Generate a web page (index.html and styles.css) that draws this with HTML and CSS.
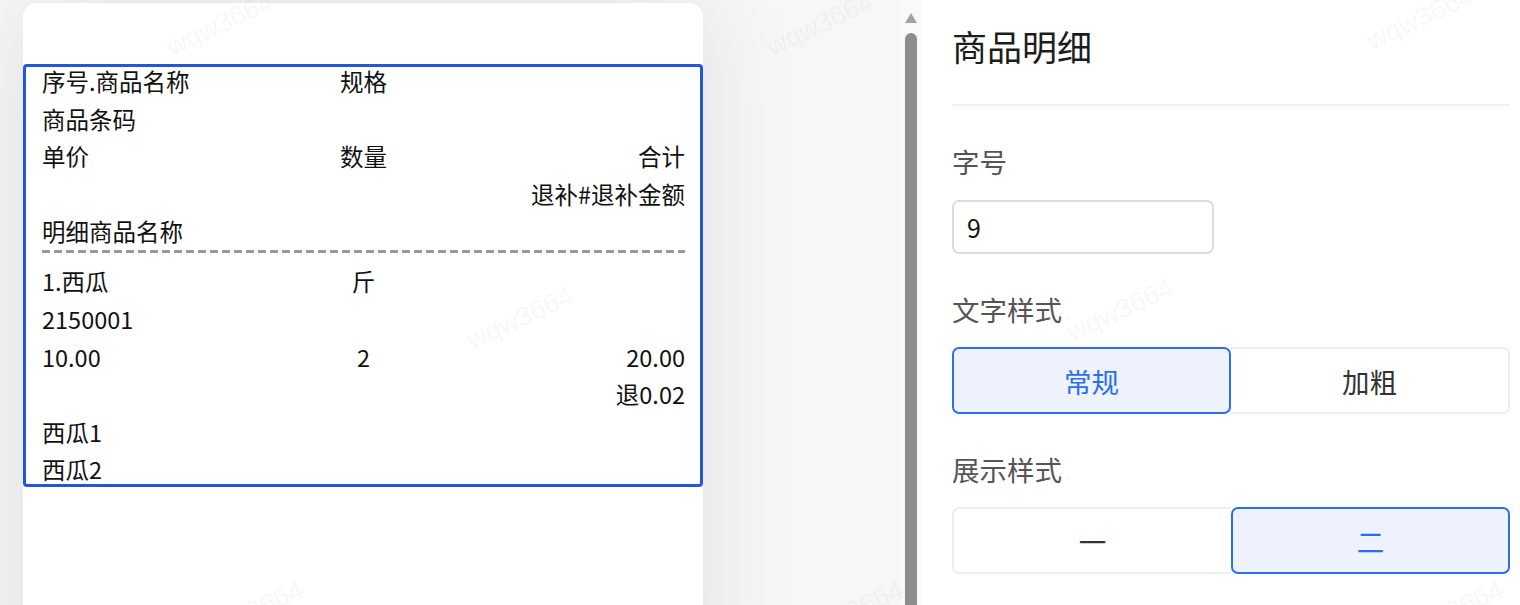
FILE: index.html
```html
<!DOCTYPE html>
<html lang="zh-CN">
<head>
<meta charset="utf-8">
<title>商品明细</title>
<link rel="stylesheet" href="styles.css">
</head>
<body>
<div class="app">
  <section class="preview">
    <div class="card">
      <div class="block">
        <div class="group">
          <div class="row"><span>序号.商品名称</span><span class="c2">规格</span><span class="c3"></span></div>
          <div class="row"><span>商品条码</span></div>
          <div class="row"><span>单价</span><span class="c2">数量</span><span class="c3">合计</span></div>
          <div class="row"><span class="c3 only">退补#退补金额</span></div>
          <div class="row"><span>明细商品名称</span></div>
        </div>
        <div class="dash"></div>
        <div class="group">
          <div class="row"><span>1.西瓜</span><span class="c2">斤</span><span class="c3"></span></div>
          <div class="row"><span>2150001</span></div>
          <div class="row"><span>10.00</span><span class="c2">2</span><span class="c3">20.00</span></div>
          <div class="row"><span class="c3 only">退0.02</span></div>
          <div class="row"><span>西瓜1</span></div>
          <div class="row"><span>西瓜2</span></div>
        </div>
      </div>
    </div>
  </section>
  <div class="scrollbar">
    <div class="arrow"></div>
    <div class="thumb"></div>
  </div>
  <aside class="panel">
    <h2 class="title">商品明细</h2>
    <div class="divider"></div>
    <div class="fields">
      <div class="field">
        <div class="label">字号</div>
        <div class="input">9</div>
      </div>
      <div class="field">
        <div class="label">文字样式</div>
        <div class="seg">
          <div class="opt active">常规</div>
          <div class="opt right">加粗</div>
        </div>
      </div>
      <div class="field">
        <div class="label">展示样式</div>
        <div class="seg">
          <div class="opt left">一</div>
          <div class="opt active">二</div>
        </div>
      </div>
    </div>
  </aside>
</div>
<div class="watermarks">
  <span class="wm wm1">wqw3664</span>
  <span class="wm wm2">wqw3664</span>
  <span class="wm wm3">wqw3664</span>
  <span class="wm wm4">wqw3664</span>
  <span class="wm wm5">wqw3664</span>
  <span class="wm wm6">wqw3664</span>
  <span class="wm wm7">wqw3664</span>
  <span class="wm wm8">wqw3664</span>
</div>
</body>
</html>
```

FILE: styles.css
```css
* { box-sizing: border-box; }

html, body {
  margin: 0;
  padding: 0;
  height: 605px;
  overflow: hidden;
}

body {
  font-family: "Noto Sans CJK SC", "Noto Sans", sans-serif;
  color: #111;
  position: relative;
}

.app {
  display: flex;
  height: 605px;
}

.preview {
  flex: 0 0 901px;
  background: #f7f7f7;
  padding: 3px 0 0 23px;
  overflow: hidden;
}

.card {
  width: 680px;
  height: 700px;
  background: #fff;
  border-radius: 14px 14px 0 0;
  padding-top: 61px;
  box-shadow: 0 0 100px rgba(0, 0, 0, 0.1);
}

.block {
  border: 3px solid #2256e0;
  border-radius: 4px;
  padding: 0 15px 0 16px;
  font-size: 23.5px;
  color: #111;
}

.group {
  display: flex;
  flex-direction: column;
  gap: 7.6px;
}

.group:first-child {
  margin-top: -1px;
}

.row {
  display: grid;
  grid-template-columns: 1fr 1fr 1fr;
  line-height: 30px;
  height: 30px;
  white-space: nowrap;
}

.c2 { text-align: center; }
.c3 { text-align: right; }
.only { grid-column: 3; }

.dash {
  height: 3px;
  margin: 4px 0 13px;
  background: repeating-linear-gradient(to right, #999 0 8px, transparent 8px 12px);
}

.scrollbar {
  flex: 0 0 20px;
  background: #f9f9f9;
  display: flex;
  flex-direction: column;
  align-items: center;
}

.arrow {
  width: 0;
  height: 0;
  margin-top: 13px;
  border-left: 6.5px solid transparent;
  border-right: 6.5px solid transparent;
  border-bottom: 10px solid #a3a3a3;
}

.thumb {
  width: 12px;
  flex: 1;
  margin-top: 10px;
  background: #8d8d8d;
  border-radius: 6px 6px 0 0;
}

.panel {
  flex: 1;
  background: #fff;
  padding: 22px 10px 0 31px;
}

.title {
  margin: 0;
  font-size: 35px;
  line-height: 48px;
  font-weight: 400;
  color: #1c1c1c;
}

.divider {
  margin-top: 34px;
  height: 2px;
  background: #f2f2f2;
}

.fields {
  margin-top: 35px;
  display: flex;
  flex-direction: column;
  gap: 35px;
}

.field {
  display: flex;
  flex-direction: column;
  gap: 19px;
}

.label {
  font-size: 27.5px;
  line-height: 40px;
  color: #555;
}

.input {
  width: 262px;
  height: 54px;
  border: 2px solid #dcdcdc;
  border-radius: 7px;
  padding-left: 13px;
  font-size: 25px;
  line-height: 50px;
  color: #111;
}

.seg {
  display: grid;
  grid-template-columns: 1fr 1fr;
  height: 67px;
  margin-top: -1px;
}

.opt {
  display: flex;
  align-items: center;
  justify-content: center;
  font-size: 27.5px;
  color: #333;
  border: 2px solid #eeeeee;
}

.opt.active {
  background: #edf2fc;
  border-color: #2c6ef0;
  color: #2c6ef0;
  border-radius: 7px;
}

.opt.right {
  border-left: 0;
  border-radius: 0 7px 7px 0;
}

.opt.left {
  border-right: 0;
  border-radius: 7px 0 0 7px;
}

.watermarks {
  position: absolute;
  inset: 0;
  pointer-events: none;
  overflow: hidden;
}

.wm {
  position: absolute;
  font-family: "Liberation Sans", Arial, sans-serif;
  font-size: 27px;
  line-height: 30px;
  color: rgba(0, 0, 0, 0.045);
  transform: translate(-50%, -50%) rotate(-25deg);
  white-space: nowrap;
}

.wm1 { left: 220px; top: 24px; }
.wm2 { left: 820px; top: 24px; }
.wm3 { left: 1420px; top: 18px; }
.wm4 { left: 520px; top: 318px; }
.wm5 { left: 1120px; top: 310px; }
.wm6 { left: 250px; top: 612px; }
.wm7 { left: 850px; top: 612px; }
.wm8 { left: 1450px; top: 612px; }
```
